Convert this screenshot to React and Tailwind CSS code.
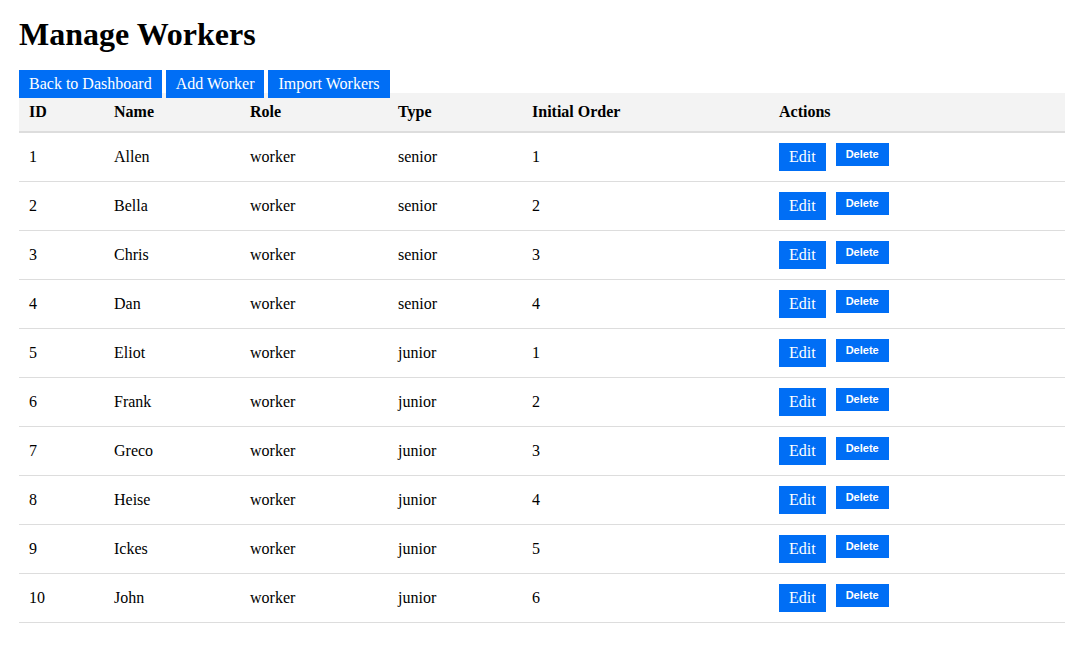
const workers = [
	{ id: 1, name: "Allen", role: "worker", type: "senior", order: 1 },
	{ id: 2, name: "Bella", role: "worker", type: "senior", order: 2 },
	{ id: 3, name: "Chris", role: "worker", type: "senior", order: 3 },
	{ id: 4, name: "Dan", role: "worker", type: "senior", order: 4 },
	{ id: 5, name: "Eliot", role: "worker", type: "junior", order: 1 },
	{ id: 6, name: "Frank", role: "worker", type: "junior", order: 2 },
	{ id: 7, name: "Greco", role: "worker", type: "junior", order: 3 },
	{ id: 8, name: "Heise", role: "worker", type: "junior", order: 4 },
	{ id: 9, name: "Ickes", role: "worker", type: "junior", order: 5 },
	{ id: 10, name: "John", role: "worker", type: "junior", order: 6 },
]

const topBtn =
	"h-[28px] px-[10px] bg-[#006ef5] text-white text-[16px] leading-[18px] whitespace-nowrap"

export default function App() {
	return (
		<div
			className="min-h-[669px] bg-white pl-[19px] pt-[16px] text-black"
			style={{ fontFamily: '"Liberation Serif", "Times New Roman", serif' }}
		>
			<h1 className="text-[32px] leading-[37px] font-bold">Manage Workers</h1>

			<div className="relative z-10 mt-[17px] flex h-[23px] items-start gap-[4px]">
				<button className={topBtn}>Back to Dashboard</button>
				<button className={topBtn}>Add Worker</button>
				<button className={topBtn}>Import Workers</button>
			</div>

			<table className="w-[1046px] table-fixed border-collapse text-[16px] leading-[18px]">
				<colgroup>
					<col className="w-[85px]" />
					<col className="w-[136px]" />
					<col className="w-[148px]" />
					<col className="w-[134px]" />
					<col className="w-[247px]" />
					<col className="w-[296px]" />
				</colgroup>
				<thead>
					<tr className="bg-[#f3f3f3] border-b-2 border-[#dddddd]">
						<th className="h-[39px] px-[10px] text-left font-bold">ID</th>
						<th className="px-[10px] text-left font-bold">Name</th>
						<th className="px-[10px] text-left font-bold">Role</th>
						<th className="px-[10px] text-left font-bold">Type</th>
						<th className="px-[10px] text-left font-bold">Initial Order</th>
						<th className="px-[10px] text-left font-bold">Actions</th>
					</tr>
				</thead>
				<tbody>
					{workers.map((w) => (
						<tr key={w.id} className="border-b border-[#dddddd]">
							<td className="h-[49px] px-[10px] align-middle">{w.id}</td>
							<td className="px-[10px] align-middle">{w.name}</td>
							<td className="px-[10px] align-middle">{w.role}</td>
							<td className="px-[10px] align-middle">{w.type}</td>
							<td className="px-[10px] align-middle">{w.order}</td>
							<td className="px-[10px] align-middle">
								<div className="flex items-start gap-[10px]">
									<button className="h-[28px] px-[10px] bg-[#006ef5] text-white text-[16px] leading-[18px]">
										Edit
									</button>
									<button
										className="h-[23px] px-[10px] bg-[#006ef5] text-white text-[11px] leading-[13px] font-bold"
										style={{ fontFamily: '"Liberation Sans", Arial, sans-serif' }}
									>
										Delete
									</button>
								</div>
							</td>
						</tr>
					))}
				</tbody>
			</table>
		</div>
	)
}
